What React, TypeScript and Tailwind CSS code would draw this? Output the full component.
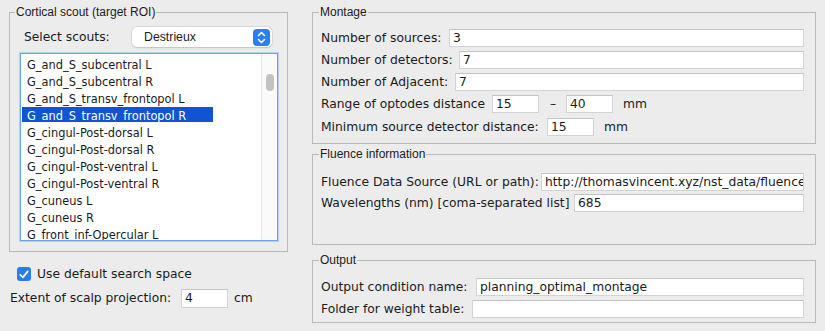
import React from "react";

const label = "font-['DejaVu_Sans',sans-serif] text-[12.3px] text-[#1b1b1b] whitespace-nowrap";
const legend = "px-[1px] font-['Liberation_Sans',Arial,sans-serif] text-[12px] leading-[14px] text-[#1b1b1b]";
const fieldset = "border border-[#b9b9b9] min-w-0";

const scouts = [
  "G_and_S_subcentral L",
  "G_and_S_subcentral R",
  "G_and_S_transv_frontopol L",
  "G_and_S_transv_frontopol R",
  "G_cingul-Post-dorsal L",
  "G_cingul-Post-dorsal R",
  "G_cingul-Post-ventral L",
  "G_cingul-Post-ventral R",
  "G_cuneus L",
  "G_cuneus R",
  "G_front_inf-Opercular L",
];

function Field({ value = "", className = "" }: { value?: string; className?: string }) {
  return (
    <div
      className={`h-[18px] min-w-0 bg-white border border-[#d3d3d3] border-t-[#c4c4c4] pl-[3px] overflow-hidden flex items-center ${label} ${className}`}
    >
      {value}
    </div>
  );
}

function Row({ text, w, value }: { text: string; w: number; value: string }) {
  return (
    <div className="flex items-center h-[18px] min-w-0">
      <div className={`${label} shrink-0`} style={{ width: w }}>
        {text}
      </div>
      <Field value={value} className="flex-1" />
    </div>
  );
}

export default function App() {
  return (
    <div className="w-[825px] h-[331px] bg-[#ececec] flex overflow-hidden">
      {/* left column */}
      <div className="w-[300px] flex flex-col">
        <fieldset className={`${fieldset} ml-[9px] mt-[5px] w-[279px] h-[247px] pl-[5px]`}>
          <legend className={legend}>Cortical scout (target ROI)</legend>
          <div className="flex items-center mt-[8px] h-[20px]">
            <div className={`${label} ml-[9px] w-[108px]`}>Select scouts:</div>
            <div className="w-[140px] h-[20px] bg-white rounded-[5px] shadow-[0_0_0_0.5px_#c8c8c8,0_1px_1.5px_rgba(0,0,0,0.18)] flex items-center justify-between pl-[12px] pr-[2px]">
              <span className="font-['Liberation_Sans',Arial,sans-serif] text-[12.3px] text-[#1b1b1b]">Destrieux</span>
              <div className="w-[17px] h-[17px] rounded-[4px] bg-[#2b7ef4] flex items-center justify-center">
                <svg width="9" height="13" viewBox="0 0 9 13" fill="none" stroke="white" strokeWidth="1.6" strokeLinecap="round" strokeLinejoin="round">
                  <path d="M1.5 4.5 L4.5 1.5 L7.5 4.5" />
                  <path d="M1.5 8.5 L4.5 11.5 L7.5 8.5" />
                </svg>
              </div>
            </div>
          </div>
          <div className="mt-[6px] ml-[5px] w-[258px] h-[188px] bg-white border border-[#6da2e6] shadow-[0_0_0_1px_#b7d1f2] flex overflow-hidden">
            <div className="flex-1 pt-[1px] pl-[1px] overflow-hidden">
              {scouts.map((s, i) => (
                <div key={s} className="h-[17px] pt-[1px]">
                  <div
                    className={`h-[15px] w-[191px] pl-[5px] pt-[3px] leading-[12px] font-['DejaVu_Sans',sans-serif] text-[11.4px] whitespace-nowrap ${
                      i === 3 ? "bg-[#0f55d3] text-white" : "text-[#1b1b1b]"
                    }`}
                  >
                    {s}
                  </div>
                </div>
              ))}
            </div>
            <div className="w-[16px] bg-[#fafafa] border-l border-[#e6e6e6] pt-[20px] flex justify-center">
              <div className="w-[8px] h-[17px] rounded-full bg-[#c2c2c2]" />
            </div>
          </div>
        </fieldset>
        <div className="flex items-center ml-[17px] mt-[15px] h-[14px]">
          <div className="w-[14px] h-[14px] rounded-[3px] bg-[#2a7af2] flex items-center justify-center">
            <svg width="10" height="9" viewBox="0 0 10 9" fill="none" stroke="white" strokeWidth="1.8" strokeLinecap="round" strokeLinejoin="round">
              <path d="M1.3 4.8 L3.9 7.4 L8.7 1.4" />
            </svg>
          </div>
          <span className={`${label} ml-[6px]`}>Use default search space</span>
        </div>
        <div className="flex items-center ml-[10px] mt-[8px] h-[19px]">
          <div className={`${label} w-[171px]`}>Extent of scalp projection:</div>
          <Field value="4" className="w-[47px] h-[19px]" />
          <span className={`${label} ml-[6px]`}>cm</span>
        </div>
      </div>

      {/* right column */}
      <div className="flex flex-col ml-[12px] w-[504px] min-w-0">
        <fieldset className={`${fieldset} mt-[5px] h-[139px] pl-[6px] pr-[11px]`}>
          <legend className={legend}>Montage</legend>
          <div className="flex flex-col gap-[4px] mt-[10px] ml-[2px]">
            <Row text="Number of sources:" w={128} value="3" />
            <Row text="Number of detectors:" w={138} value="7" />
            <Row text="Number of Adjacent:" w={134} value="7" />
            <div className="flex items-center h-[18px]">
              <div className={`${label} w-[171px]`}>Range of optodes distance</div>
              <Field value="15" className="w-[47px]" />
              <div className={`${label} w-[27px] pl-[11px]`}>–</div>
              <Field value="40" className="w-[47px]" />
              <span className={`${label} ml-[10px]`}>mm</span>
            </div>
            <div className="flex items-center h-[18px] mt-[1px]">
              <div className={`${label} w-[226px]`}>Minimum source detector distance:</div>
              <Field value="15" className="w-[47px]" />
              <span className={`${label} ml-[10px]`}>mm</span>
            </div>
          </div>
        </fieldset>
        <fieldset className={`${fieldset} mt-[3px] h-[98px] pl-[6px] pr-[11px]`}>
          <legend className={legend}>Fluence information</legend>
          <div className="flex flex-col gap-[3px] mt-[12px] ml-[2px] min-w-0">
            <Row text="Fluence Data Source (URL or path):" w={220} value="http://thomasvincent.xyz/nst_data/fluence/" />
            <Row text="Wavelengths (nm) [coma-separated list]" w={253} value="685" />
          </div>
        </fieldset>
        <fieldset className={`${fieldset} mt-[8px] h-[70px] pl-[6px] pr-[11px]`}>
          <legend className={legend}>Output</legend>
          <div className="flex flex-col gap-[4px] mt-[11px] ml-[2px]">
            <Row text="Output condition name:" w={155} value="planning_optimal_montage" />
            <Row text="Folder for weight table:" w={151} value="" />
          </div>
        </fieldset>
      </div>
    </div>
  );
}
